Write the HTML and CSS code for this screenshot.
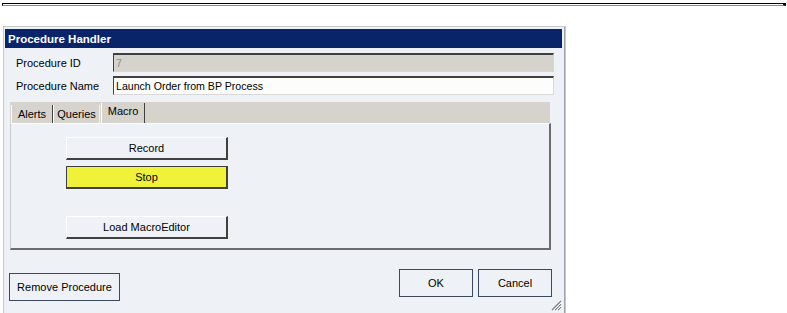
FILE: index.html
```html
<!DOCTYPE html>
<html>
<head>
<meta charset="utf-8">
<link rel="stylesheet" href="styles.css">
</head>
<body>
<div class="topline"></div>
<div class="dialog">
  <div class="title">Procedure Handler</div>
  <div class="form">
    <div class="row"><span class="label">Procedure ID</span><div class="input disabled">7</div></div>
    <div class="row"><span class="label">Procedure Name</span><div class="input">Launch Order from BP Process</div></div>
  </div>
  <div class="tabs">
    <div class="tab t-alerts">Alerts</div>
    <div class="tab t-queries">Queries</div>
    <div class="tab t-macro active">Macro</div>
  </div>
  <div class="panel">
    <button class="btn">Record</button>
    <button class="btn stop">Stop</button>
    <button class="btn load">Load MacroEditor</button>
  </div>
  <div class="footer">
    <button class="fbtn remove">Remove Procedure</button>
    <div class="spacer"></div>
    <button class="fbtn ok">OK</button>
    <button class="fbtn cancel">Cancel</button>
    <svg class="grip" width="12" height="12" viewBox="0 0 12 12">
      <path d="M11 2 L2 11 M11 5 L5 11 M11 8 L8 11" stroke="#7a8088" stroke-width="1.2"/>
      <path d="M12 3 L3 12 M12 6 L6 12 M12 9 L9 12" stroke="#ffffff" stroke-width="1"/>
    </svg>
  </div>
</div>
</body>
</html>
```
FILE: styles.css
```css
html, body { margin: 0; padding: 0; background: #ffffff; }
body { font-family: "Liberation Sans", Arial, sans-serif; font-size: 11px; color: #000; overflow: hidden; }

.topline {
  margin: 3px 0 0 2px;
  width: 780px;
  height: 1px;
  border-top: 1px solid #000;
  border-bottom: 1px solid #8c8c8c;
  border-left: 1px solid #000;
  border-right: 3px solid #000;
}

.dialog {
  margin: 20px 0 0 3px;
  width: 563px;
  height: 287px;
  box-sizing: border-box;
  border: 1px solid #c4c8cc;
  border-bottom: none;
  box-shadow: inset -1px 0 0 #a0a4a8;
  background: #eef2f6;
  padding: 2px 2px 0 1px;
  display: flex;
  flex-direction: column;
  position: relative;
}

.title {
  height: 19px;
  background: #0a246a;
  color: #fff;
  font-weight: bold;
  font-size: 11.5px;
  line-height: 20px;
  padding-left: 3px;
  margin-right: 1px;
}

.form {
  margin: 5px 9px 0 11px;
  display: flex;
  flex-direction: column;
  gap: 4px;
}
.row { display: flex; align-items: center; height: 19px; }
.label { width: 97px; }
.input {
  flex: 1;
  height: 19px;
  box-sizing: border-box;
  background: #fdfdfb;
  border-top: 2px solid #404040;
  border-left: 1px solid #404040;
  border-right: 1px solid #d8d8d8;
  border-bottom: 1px solid #d8d8d8;
  padding-left: 2px;
  line-height: 16px;
  font-size: 10.6px;
}
.input.disabled { background: #d6d3cc; color: #8c8c8c; }

.tabs {
  margin: 7px 13px 0 5px;
  height: 21px;
  background: #d6d3cc;
  display: flex;
  align-items: flex-end;
  padding-left: 1px;
  box-sizing: border-box;
}
.tab {
  height: 18px;
  box-sizing: border-box;
  border-left: 1px solid #ffffff;
  border-right: 1px solid #404040;
  line-height: 18px;
  text-align: center;
  background: #d6d3cc;
}
.t-alerts { width: 42px; }
.t-queries { width: 47px; border-right-color: #f0f0f0; }
.t-macro { width: 44px; height: 20px; line-height: 16px; margin-left: 1px; }

.panel {
  margin: 0 12px 0 5px;
  height: 127px;
  box-sizing: border-box;
  border-left: 1px solid #c8c8c8;
  border-top: 1px solid #ffffff;
  border-right: 2px solid #6c6c6c;
  border-bottom: 2px solid #6c6c6c;
  background: #eef2f6;
  padding: 13px 0 0 55px;
  display: flex;
  flex-direction: column;
  align-items: flex-start;
}
.btn {
  width: 162px;
  height: 23px;
  box-sizing: border-box;
  font-family: inherit;
  font-size: 11px;
  background: #eef2f6;
  border: none;
  border-top: 1px solid #ffffff;
  border-left: 1px solid #ffffff;
  border-right: 2px solid #404040;
  border-bottom: 2px solid #404040;
  padding: 0;
  color: #000;
}
.btn.stop {
  margin-top: 6px;
  background: #f0f23a;
  border-top: 1px solid #404040;
  border-left: 1px solid #404040;
}
.btn.load { margin-top: 27px; }

.footer {
  display: flex;
  align-items: flex-start;
  padding: 22px 0 0 4px;
  flex: 1;
  position: relative;
}
.fbtn {
  height: 28px;
  box-sizing: border-box;
  font-family: inherit;
  font-size: 11px;
  background: #eef2f6;
  border: 1px solid #3c4a5e;
  color: #000;
  padding: 0;
}
.remove { width: 111px; margin-top: 1px; }
.spacer { flex: 1; }
.ok { width: 74px; margin-top: -3px; }
.cancel { width: 74px; margin-top: -3px; margin-left: 5px; margin-right: 11px; }
.grip { position: absolute; right: 1px; bottom: 2px; }
```
